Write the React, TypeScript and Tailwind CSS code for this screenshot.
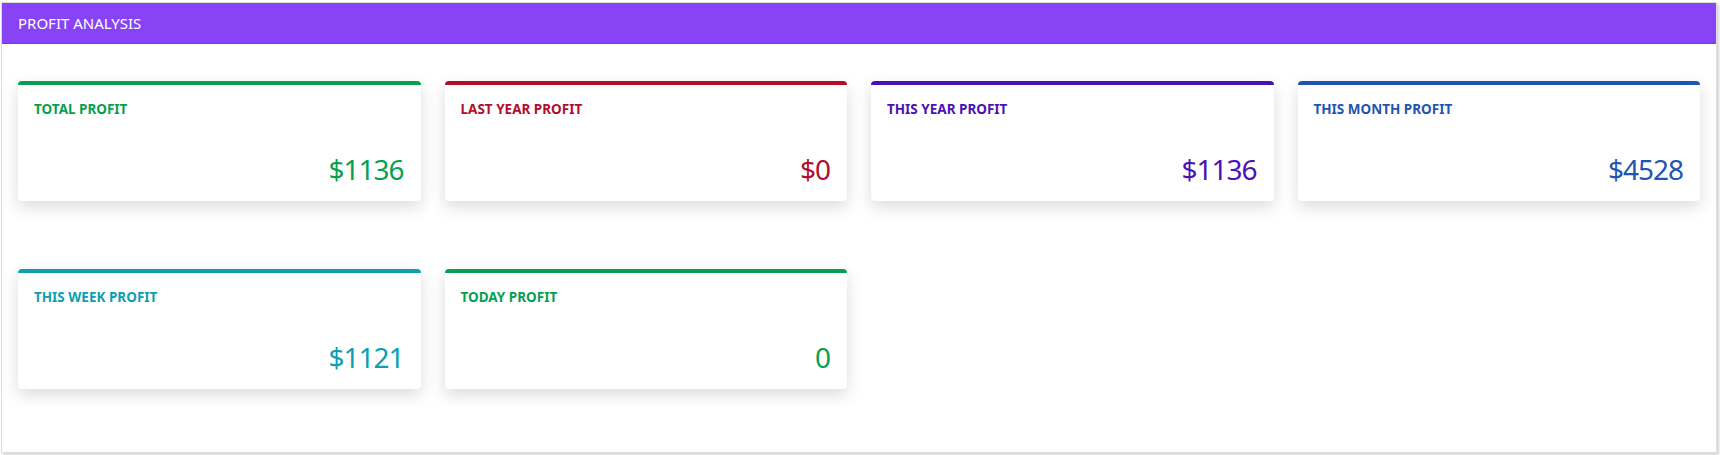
const CARDS = [
  { title: "TOTAL PROFIT", value: "$1136", color: "text-[#06a052]", border: "border-t-[#06a052]" },
  { title: "LAST YEAR PROFIT", value: "$0", color: "text-[#b30d2b]", border: "border-t-[#b30d2b]" },
  { title: "THIS YEAR PROFIT", value: "$1136", color: "text-[#4a12b4]", border: "border-t-[#4a12b4]" },
  { title: "THIS MONTH PROFIT", value: "$4528", color: "text-[#1f55b2]", border: "border-t-[#1f55b2]" },
  { title: "THIS WEEK PROFIT", value: "$1121", color: "text-[#0c9fb1]", border: "border-t-[#0c9fb1]" },
  { title: "TODAY PROFIT", value: "0", color: "text-[#06a052]", border: "border-t-[#06a052]" },
];

export default function App() {
  return (
    <div className="w-[1720px] h-[455px] bg-white pt-[2px] pl-[1px] font-['Noto_Sans',sans-serif]">
      <section className="w-[1716px] h-[451px] border border-[#dedede] shadow-[2px_2px_3px_rgba(0,0,0,0.18)] bg-white">
        <header className="h-[41px] bg-[#8843f5] border-b border-[#7a38de] px-4 flex items-center">
          <h2 className="text-[15px] text-white leading-none">PROFIT ANALYSIS</h2>
        </header>

        <div className="grid grid-cols-4 gap-x-6 gap-y-[68px] px-4 pt-[37px]">
          {CARDS.map((c) => (
            <div
              key={c.title}
              className={`h-[120px] rounded-[4px] border-t-4 ${c.border} bg-white shadow-[0_6px_16px_rgba(0,0,0,0.14)] flex flex-col justify-between px-4 pt-[15px] pb-[18px]`}
            >
              <p className={`text-[13.5px] font-bold leading-[18px] ${c.color}`}>{c.title}</p>
              <p className={`text-[28px] leading-none tracking-[-1px] text-right pr-[1px] ${c.color}`}>{c.value}</p>
            </div>
          ))}
        </div>
      </section>
    </div>
  );
}
